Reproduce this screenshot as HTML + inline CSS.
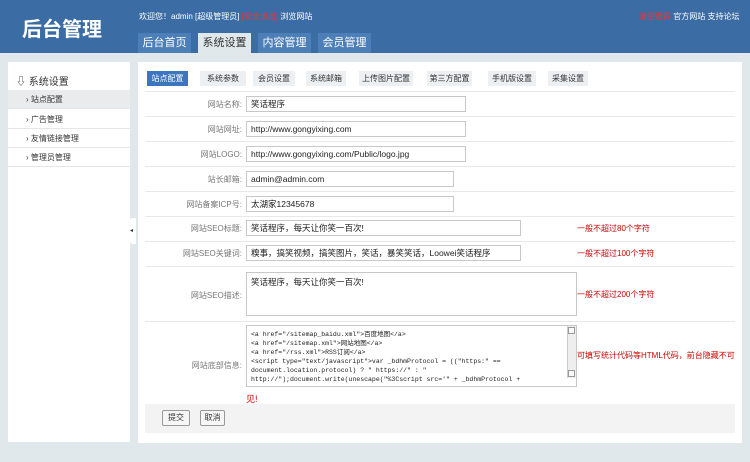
<!DOCTYPE html><html><head><meta charset="utf-8"><style>
*{margin:0;padding:0;box-sizing:border-box}
body{width:750px;height:462px;background:#e1e8eb;font-family:"Liberation Sans","Noto Sans CJK SC",sans-serif;font-size:9px;color:#333;position:relative;overflow:hidden}
.a{position:absolute}
.hd{left:0;top:0;width:750px;height:53px;background:#3c6ca4}
.nav{top:33px;height:20px;width:53px;background:#4c7eb8;color:#fff;font-size:11px;text-align:center;line-height:20px}
.nav.on{background:#e1e8eb;color:#333}
.side{left:8px;top:62px;width:122px;height:380px;background:#fff}
.si{left:8px;width:122px;height:19px;border-bottom:1px solid #e6e6e6;line-height:19px;padding-left:18px;font-size:8px}
.main{left:138px;top:62px;width:604px;height:381px;background:#fff}
.tab{top:71px;height:15px;line-height:15px;background:#edf0f2;font-size:8px;text-align:center}
.lab{width:107px;left:135px;text-align:right;color:#777;font-size:8px}
.inp{left:246px;height:16px;border:1px solid #c8c8c8;background:#fff;line-height:14px;padding-left:4px;font-size:8.5px;color:#222}
.ln{left:145px;width:590px;height:1px;background:#e8e8e8}
.tip{color:#c00;font-size:8px}
.btn{top:410px;height:16px;border:1px solid #999;border-radius:2px;background:#f6f6f6;font-size:8px;line-height:14px;text-align:center}
</style></head><body>
<div class="a hd"></div>
<div class="a" style="left:22px;top:13px;color:#fff;font-size:20px;font-weight:bold">后台管理</div>
<div class="a" style="left:139px;top:11px;color:#fff;font-size:8px">欢迎您！admin [超级管理员] <span style="color:#e33">[安全退出]</span> 浏览网站</div>
<div class="a" style="left:639px;top:11px;color:#fff;font-size:8px"><span style="color:#e33">清空缓存</span> 官方网站 支持论坛</div>
<div class="a nav" style="left:138px">后台首页</div>
<div class="a nav on" style="left:198px">系统设置</div>
<div class="a nav" style="left:258px">内容管理</div>
<div class="a nav" style="left:318px">会员管理</div>
<div class="a side"></div>
<div class="a" style="left:16px;top:73px;font-size:10px">⇩ 系统设置</div>
<div class="a si" style="top:90px;background:#e9ebec">› 站点配置</div>
<div class="a si" style="top:110px">› 广告管理</div>
<div class="a si" style="top:129px">› 友情链接管理</div>
<div class="a si" style="top:148px">› 管理员管理</div>
<div class="a" style="left:130px;top:218px;width:6px;height:26px;background:#fff;border-radius:3px 0 0 3px;font-size:6px;line-height:26px">◂</div>
<div class="a main"></div>
<div class="a tab" style="left:147px;width:41px;background:#3c76c0;color:#fff">站点配置</div>
<div class="a tab" style="left:200px;width:46px">系统参数</div>
<div class="a tab" style="left:253px;width:42px">会员设置</div>
<div class="a tab" style="left:306px;width:40px">系统邮箱</div>
<div class="a tab" style="left:359px;width:54px">上传图片配置</div>
<div class="a tab" style="left:427px;width:45px">第三方配置</div>
<div class="a tab" style="left:488px;width:48px">手机版设置</div>
<div class="a tab" style="left:548px;width:40px">采集设置</div>
<div class="a ln" style="top:91px"></div>
<div class="a lab" style="top:99px">网站名称:</div><div class="a inp" style="top:96px;width:220px">笑话程序</div>
<div class="a ln" style="top:116px"></div>
<div class="a lab" style="top:124px">网站网址:</div><div class="a inp" style="top:121px;width:220px">http://www.gongyixing.com</div>
<div class="a ln" style="top:141px"></div>
<div class="a lab" style="top:149px">网站LOGO:</div><div class="a inp" style="top:146px;width:220px">http://www.gongyixing.com/Public/logo.jpg</div>
<div class="a ln" style="top:166px"></div>
<div class="a lab" style="top:174px">站长邮箱:</div><div class="a inp" style="top:171px;width:208px">admin@admin.com</div>
<div class="a ln" style="top:191px"></div>
<div class="a lab" style="top:199px">网站备案ICP号:</div><div class="a inp" style="top:196px;width:208px">太湖家12345678</div>
<div class="a ln" style="top:216px"></div>
<div class="a lab" style="top:223px">网站SEO标题:</div><div class="a inp" style="top:220px;width:275px">笑话程序，每天让你笑一百次!</div>
<div class="a tip" style="left:577px;top:223px">一般不超过80个字符</div>
<div class="a ln" style="top:241px"></div>
<div class="a lab" style="top:248px">网站SEO关键词:</div><div class="a inp" style="top:245px;width:275px">糗事，搞笑视频，搞笑图片，笑话，暴笑笑话，Loowei笑话程序</div>
<div class="a tip" style="left:577px;top:248px">一般不超过100个字符</div>
<div class="a ln" style="top:266px"></div>
<div class="a lab" style="top:290px">网站SEO描述:</div><div class="a inp" style="top:272px;width:331px;height:44px;padding-top:2px">笑话程序，每天让你笑一百次!</div>
<div class="a tip" style="left:577px;top:289px">一般不超过200个字符</div>
<div class="a ln" style="top:321px"></div>
<div class="a lab" style="top:360px">网站底部信息:</div>
<div class="a inp" style="top:325px;width:331px;height:62px;font-family:'Liberation Mono',monospace;font-size:6.5px;line-height:9px;padding-top:4px;overflow:hidden;white-space:pre">&lt;a href="/sitemap_baidu.xml"&gt;百度地图&lt;/a&gt;
&lt;a href="/sitemap.xml"&gt;网站地图&lt;/a&gt;
&lt;a href="/rss.xml"&gt;RSS订阅&lt;/a&gt;
&lt;script type="text/javascript"&gt;var _bdhmProtocol = (("https:" ==
document.location.protocol) ? " https://" : "
http://");document.write(unescape("%3Cscript src='" + _bdhmProtocol +</div>
<div class="a" style="left:567px;top:326px;width:9px;height:52px;background:#eee;border-left:1px solid #ccc"></div>
<div class="a" style="left:568px;top:327px;width:7px;height:7px;background:#f8f8f8;border:1px solid #999"></div>
<div class="a" style="left:568px;top:370px;width:7px;height:7px;background:#f8f8f8;border:1px solid #999"></div>
<div class="a tip" style="left:577px;top:350px">可填写统计代码等HTML代码，前台隐藏不可</div>
<div class="a tip" style="left:246px;top:392px;font-size:9px">见!</div>
<div class="a" style="left:145px;top:404px;width:590px;height:29px;background:#f3f3f3"></div>
<div class="a btn" style="left:162px;width:28px">提交</div>
<div class="a btn" style="left:200px;width:25px">取消</div>
</body></html>
